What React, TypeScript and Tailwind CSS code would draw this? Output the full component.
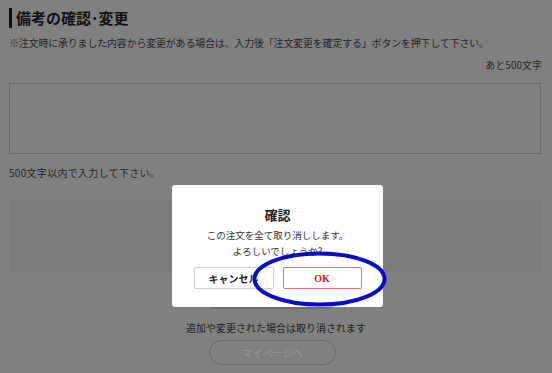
import React from "react";

export default function App() {
  const jp = { fontFamily: '"Noto Sans CJK JP", "Noto Sans", sans-serif' };
  return (
    <div className="relative w-[552px] h-[373px] bg-[#808080] overflow-hidden" style={jp}>
      <div className="px-[9px] pt-[8px] flex flex-col">
        <div className="h-[20px] flex items-center border-l-[3px] border-[#111] pl-[4px] text-[15px] font-bold leading-[20px] text-[#111] whitespace-nowrap">
          備考の確認･変更
        </div>
        <div className="mt-[8px] text-[10px] leading-[14px] text-[#262626] tracking-[-0.2px] whitespace-nowrap">
          ※注文時に承りました内容から変更がある場合は、入力後「注文変更を確定する」ボタンを押下して下さい。
        </div>
        <div className="mt-[8px] text-[10px] leading-[14px] text-[#262626] text-right pr-[1px]">
          あと500文字
        </div>
        <div className="mt-[11px] h-[71px] w-[532px] border border-[#686868] bg-[#808080]" />
        <div className="mt-[12px] text-[10px] leading-[14px] text-[#262626] tracking-[0.3px]">
          500文字以内で入力して下さい。
        </div>
        <div className="mt-[21px] h-[70px] w-[532px] bg-[#7b7b7b]" />
        <div className="mt-[28px] self-center ml-[-10px] w-[122px] h-[10px] rounded-[3px] bg-[#6c6c6c]" />
        <div className="mt-[12px] text-center text-[10px] leading-[14px] text-[#1e1e1e]">
          追加や変更された場合は取り消されます
        </div>
        <div className="mt-[5px] self-center ml-[-7px] w-[127px] h-[25px] rounded-full border-[1.5px] border-[#5d6a70] flex items-center justify-center text-[10px] text-[#9a9a9a]">
          マイページへ
        </div>
      </div>

      <div className="absolute left-[172px] top-[185px] w-[211px] h-[122px] bg-white rounded-[3px] flex flex-col items-center">
        <div className="mt-[21px] text-[13px] font-bold leading-[18px] text-[#222]">確認</div>
        <div className="mt-[3px] text-[9.5px] leading-[16px] text-[#333] text-center">
          この注文を全て取り消しします。
          <br />
          よろしいでしょうか?
        </div>
        <div className="mt-[8px] flex gap-[9px]">
          <div className="w-[80px] h-[22px] border border-[#cfcfcf] rounded-[2px] flex items-center justify-center text-[10px] font-bold text-[#222]">
            キャンセル
          </div>
          <div className="w-[79px] h-[22px] border border-[#e0707a] rounded-[2px] flex items-center justify-center text-[10px] font-bold text-[#d01818]" style={{ fontFamily: '"Liberation Serif", serif' }}>
            OK
          </div>
        </div>
      </div>

      <svg className="absolute left-0 top-0" width="552" height="373" viewBox="0 0 552 373">
        <ellipse cx="319.5" cy="279" rx="65" ry="25.5" fill="none" stroke="#0a0acc" strokeWidth="4" />
      </svg>
    </div>
  );
}
